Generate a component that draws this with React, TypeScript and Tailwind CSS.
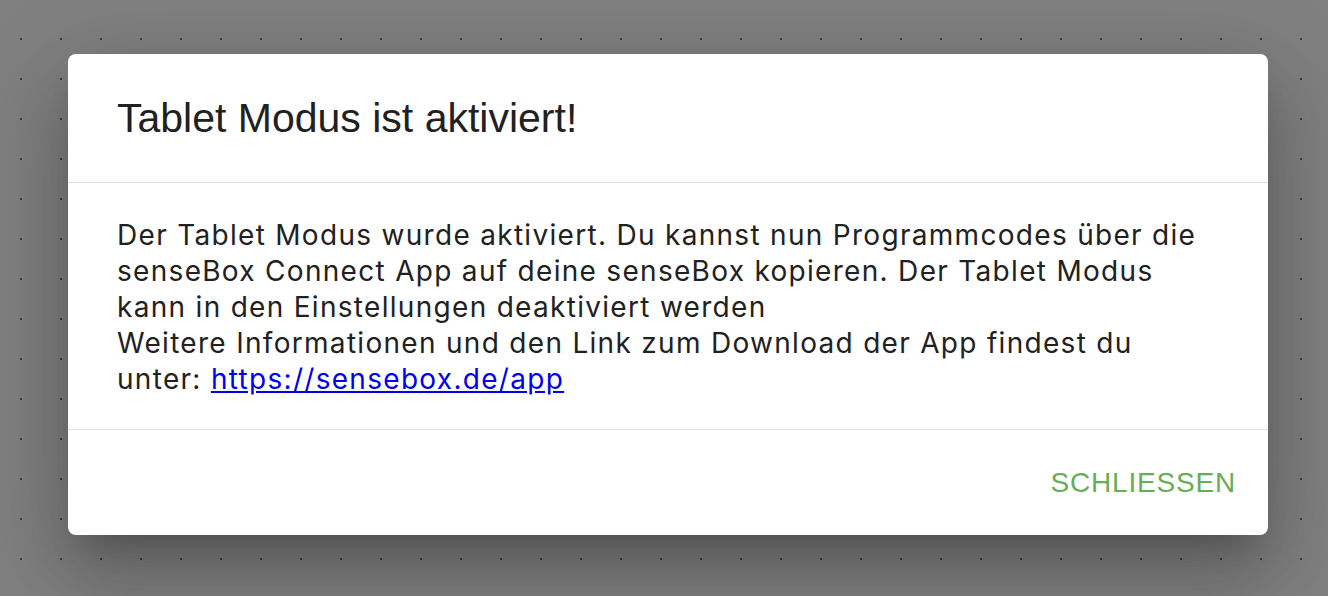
import React from "react"

const helv = "font-['Liberation_Sans',Arial,sans-serif]"

export default function App() {
  return (
    <div
      className={`w-[1328px] h-[596px] overflow-hidden bg-[#808080] bg-[radial-gradient(circle_at_1px_1px,#2c4a28_0.9px,transparent_1.3px)] bg-[size:40px_40px] bg-[position:20px_38px] pl-[68px] pt-[54px]`}
    >
      {/* ── Dialog ── */}
      <div className="w-[1200px] rounded-lg bg-white text-[#212121] shadow-[0px_22px_30px_-14px_rgba(0,0,0,0.2),0px_48px_76px_6px_rgba(0,0,0,0.14),0px_18px_92px_16px_rgba(0,0,0,0.12)]">
        {/* Title */}
        <div className="px-[49px] py-[32px]">
          <h2 className={`${helv} text-[41px] leading-[64px] font-normal`}>
            Tablet Modus ist aktiviert!
          </h2>
        </div>

        {/* Content */}
        <div className="border-y border-[#e0e0e0] px-[49px] pt-[34px] pb-[32px]">
          <p className="font-['Inter',sans-serif] text-[28px] leading-[36px] tracking-[1.3px]">
            Der Tablet Modus wurde aktiviert. Du kannst nun Programmcodes über die senseBox Connect
            App auf deine senseBox kopieren. Der Tablet Modus kann in den Einstellungen deaktiviert
            werden
            <br />
            Weitere Informationen und den Link zum Download der App findest du unter:{" "}
            <a href="#" className="text-[#0000ee] underline">
              https://sensebox.de/app
            </a>
          </p>
        </div>

        {/* Actions */}
        <div className="flex justify-end p-[16px]">
          <button
            type="button"
            className={`${helv} text-[28px] leading-[49px] tracking-[0.8px] uppercase text-[#66ad56] px-[16px] py-[12px] rounded`}
          >
            Schliessen
          </button>
        </div>
      </div>
    </div>
  )
}
